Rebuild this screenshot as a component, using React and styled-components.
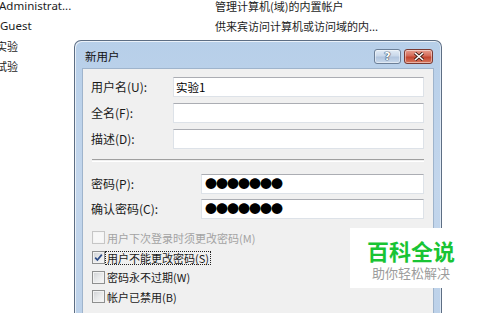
import React from "react";
import styled, { createGlobalStyle } from "styled-components";

const GlobalStyle = createGlobalStyle`
  html, body {
    margin: 0;
    padding: 0;
    background: #fff;
  }
  body {
    font-family: "Noto Sans CJK SC", "Noto Sans", sans-serif;
  }
`;

const Desktop = styled.div`
  position: relative;
  width: 500px;
  height: 313px;
  overflow: hidden;
  background: #fff;
`;

// user list behind the dialog
const UserList = styled.div`
  display: grid;
  grid-template-columns: 215px 1fr;
  grid-auto-rows: 20px;
  margin-top: -4px;
  color: #1c1c1c;
`;

const Cell = styled.div`
  line-height: 20px;
  white-space: nowrap;
  margin-left: ${(p) => p.$shift || 0}px;
  font-family: ${(p) =>
    p.$latin ? '"Noto Sans", sans-serif' : '"Noto Sans CJK SC", sans-serif'};
  font-size: ${(p) => (p.$latin ? "11.5px" : "11px")};
`;

// dialog window
const Window = styled.div`
  position: absolute;
  left: 74px;
  top: 40px;
  width: 368px;
  height: 290px;
  box-sizing: border-box;
  border: 1px solid #5d6e84;
  border-bottom: none;
  border-radius: 7px 7px 0 0;
  background: linear-gradient(180deg, #b7cfe9 0%, #c3d6ec 50%, #bcd1e9 100%);
  box-shadow: inset 1px 1px 0 rgba(255, 255, 255, 0.7),
    inset -1px 0 0 rgba(255, 255, 255, 0.5);
  padding: 0 7px;
  display: flex;
  flex-direction: column;
`;

const TitleBar = styled.div`
  height: 27px;
  display: flex;
  align-items: flex-start;
  justify-content: space-between;
`;

const Title = styled.div`
  padding: 7px 0 0 3px;
  font-size: 11.5px;
  line-height: 16px;
  color: #111;
`;

const Controls = styled.div`
  display: flex;
  gap: 3px;
  margin: 8px 1px 0 0;
`;

const CaptionButton = styled.div`
  width: ${(p) => (p.$close ? 29 : 27)}px;
  height: 15px;
  box-sizing: border-box;
  border: 1px solid ${(p) => (p.$close ? "#7a3a32" : "#6c7f97")};
  border-radius: 3px;
  background: ${(p) =>
    p.$close
      ? "linear-gradient(180deg, #e8a090 0%, #d46a58 45%, #c2452f 55%, #d8785f 100%)"
      : "linear-gradient(180deg, #e3ecf6 0%, #c9d8ea 45%, #b1c5de 55%, #c9d9ec 100%)"};
  box-shadow: inset 0 0 0 1px rgba(255, 255, 255, 0.45);
  display: flex;
  align-items: center;
  justify-content: center;
  font-family: "DejaVu Sans", sans-serif;
  font-weight: bold;
  font-size: 11px;
  line-height: 13px;
  color: #fff;
  text-shadow: 0 0 1px #2d3f58, 0 0 1px #2d3f58, 0 0 1px #2d3f58;
`;

const Client = styled.div`
  flex: 1;
  background: #f0f0f0;
  border: 1px solid #9fb4cc;
  border-bottom: none;
  padding: 8px 9px 0 8px;
  display: flex;
  flex-direction: column;
`;

const FieldGroup = styled.div`
  display: flex;
  flex-direction: column;
  gap: ${(p) => p.$gap}px;
`;

const FieldRow = styled.div`
  display: grid;
  grid-template-columns: ${(p) => p.$label}px 1fr;
  align-items: center;
  height: 20px;
`;

const Label = styled.div`
  font-size: 12px;
  line-height: 16px;
  color: #1a1a1a;
  white-space: nowrap;
`;

const Input = styled.div`
  height: 20px;
  box-sizing: border-box;
  background: #fff;
  border: 1px solid #dde2e8;
  border-top-color: #abadb3;
  padding: 0 2px;
  display: flex;
  align-items: center;
  font-size: 11.5px;
  color: #000;
`;

const Dots = styled.span`
  font-family: "Noto Sans CJK SC", sans-serif;
  font-size: 12px;
  letter-spacing: -1px;
  line-height: 18px;
  padding-left: 1px;
`;

const Separator = styled.div`
  height: 1px;
  margin: 10px 0 12px 1px;
  border-top: 1px solid #a0a0a0;
  border-bottom: 1px solid #fff;
`;

const Options = styled.div`
  margin-top: 9px;
  display: flex;
  flex-direction: column;
`;

const Option = styled.div`
  height: 19.7px;
  display: flex;
  align-items: center;
  padding-left: 1px;
  font-size: 11px;
  color: ${(p) => (p.$disabled ? "#a3a3a3" : "#1a1a1a")};
`;

const Box = styled.span`
  width: 13px;
  height: 13px;
  box-sizing: border-box;
  flex-shrink: 0;
  border: 1px solid ${(p) => (p.$disabled ? "#c6c6c6" : "#8e8f8f")};
  background: ${(p) =>
    p.$disabled
      ? "#f7f7f7"
      : "linear-gradient(135deg, #cfd1d4 0%, #e8e9ea 50%, #f8f8f8 100%)"};
  box-shadow: inset 0 0 0 1px ${(p) => (p.$disabled ? "#f4f4f4" : "#f2f2f2")};
  display: flex;
  align-items: center;
  justify-content: center;
`;

const OptionText = styled.span`
  margin-left: 0;
  padding: 0 1px;
  line-height: 12px;
  border: 1px ${(p) => (p.$focus ? "dotted #222" : "solid transparent")};
`;

// watermark badge in the corner
const Badge = styled.div`
  position: absolute;
  left: 350px;
  top: 228px;
  width: 150px;
  height: 60px;
  background: #fff;
  box-sizing: border-box;
  padding-top: 14px;
  font-family: "Liberation Sans", "Noto Sans CJK SC", sans-serif;
`;

const BadgeInner = styled.div`
  width: 122px;
  display: flex;
  flex-direction: column;
  align-items: center;
  gap: 3px;
`;

const Brand = styled.div`
  font-size: 22px;
  line-height: 22px;
  font-weight: bold;
  color: #19c434;
`;

const Slogan = styled.div`
  font-size: 13px;
  line-height: 14px;
  color: #9c9c9c;
`;

const CheckMark = () => (
  <svg width="9" height="9" viewBox="0 0 9 9">
    <path
      d="M1.2 4.6 L3.4 7 L7.8 1.6"
      fill="none"
      stroke="#2b4a86"
      strokeWidth="1.7"
    />
  </svg>
);

const CloseIcon = () => (
  <svg width="12" height="9" viewBox="0 0 12 9">
    <path d="M2 1 L10 8 M10 1 L2 8" stroke="#3d1a14" strokeWidth="3.2" />
    <path d="M2 1 L10 8 M10 1 L2 8" stroke="#fff" strokeWidth="1.6" />
  </svg>
);

const options = [
  { text: "用户下次登录时须更改密码(M)", disabled: true },
  { text: "用户不能更改密码(S)", checked: true, focus: true },
  { text: "密码永不过期(W)" },
  { text: "帐户已禁用(B)" },
];

export default function App() {
  return (
    <>
      <GlobalStyle />
      <Desktop>
        <UserList>
          <Cell $latin $shift={-1}>Administrat...</Cell>
          <Cell>管理计算机(域)的内置帐户</Cell>
          <Cell $latin $shift={0}>Guest</Cell>
          <Cell>供来宾访问计算机或访问域的内...</Cell>
          <Cell $shift={-4}>实验</Cell>
          <Cell />
          <Cell $shift={-4}>试验</Cell>
          <Cell />
        </UserList>

        <Window>
          <TitleBar>
            <Title>新用户</Title>
            <Controls>
              <CaptionButton>?</CaptionButton>
              <CaptionButton $close>
                <CloseIcon />
              </CaptionButton>
            </Controls>
          </TitleBar>
          <Client>
            <FieldGroup $gap={6}>
              <FieldRow $label={82}>
                <Label>用户名(U):</Label>
                <Input>实验1</Input>
              </FieldRow>
              <FieldRow $label={82}>
                <Label>全名(F):</Label>
                <Input />
              </FieldRow>
              <FieldRow $label={82}>
                <Label>描述(D):</Label>
                <Input />
              </FieldRow>
            </FieldGroup>
            <Separator />
            <FieldGroup $gap={5}>
              <FieldRow $label={110}>
                <Label>密码(P):</Label>
                <Input>
                  <Dots>●●●●●●●</Dots>
                </Input>
              </FieldRow>
              <FieldRow $label={110}>
                <Label>确认密码(C):</Label>
                <Input>
                  <Dots>●●●●●●●</Dots>
                </Input>
              </FieldRow>
            </FieldGroup>
            <Options>
              {options.map((o) => (
                <Option key={o.text} $disabled={o.disabled}>
                  <Box $disabled={o.disabled}>{o.checked && <CheckMark />}</Box>
                  <OptionText $focus={o.focus}>{o.text}</OptionText>
                </Option>
              ))}
            </Options>
          </Client>
        </Window>

        <Badge>
          <BadgeInner>
            <Brand>百科全说</Brand>
            <Slogan>助你轻松解决</Slogan>
          </BadgeInner>
        </Badge>
      </Desktop>
    </>
  );
}
